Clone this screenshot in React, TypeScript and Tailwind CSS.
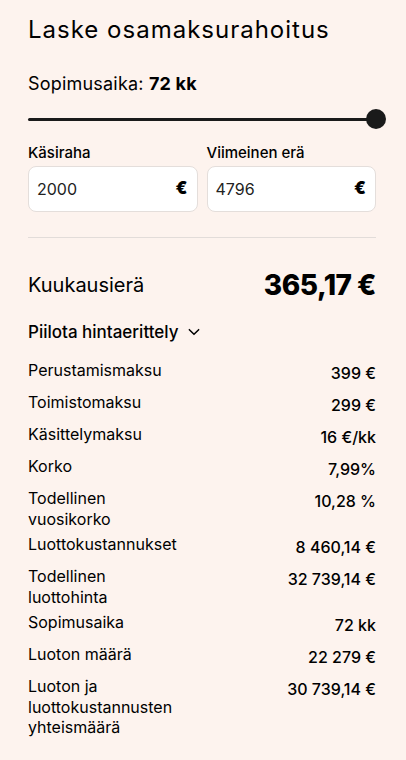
import React from "react";

const rows: { label: string; value: string }[] = [
  { label: "Perustamismaksu", value: "399 €" },
  { label: "Toimistomaksu", value: "299 €" },
  { label: "Käsittelymaksu", value: "16 €/kk" },
  { label: "Korko", value: "7,99%" },
  { label: "Todellinen vuosikorko", value: "10,28 %" },
  { label: "Luottokustannukset", value: "8 460,14 €" },
  { label: "Todellinen luottohinta", value: "32 739,14 €" },
  { label: "Sopimusaika", value: "72 kk" },
  { label: "Luoton määrä", value: "22 279 €" },
  { label: "Luoton ja luottokustannusten yhteismäärä", value: "30 739,14 €" },
];

const MoneyInput = ({ label, value }: { label: string; value: string }) => (
  <div className="flex-1 flex flex-col gap-[3px]">
    <label className="text-[15px] font-medium leading-[20px] text-black">{label}</label>
    <div className="h-[46px] flex items-center justify-between rounded-[8px] border border-[#e4dedb] bg-white pl-[8px] pr-[9px]">
      <span className="text-[16px] text-[#222]">{value}</span>
      <span className="text-[17px] font-black text-black">€</span>
    </div>
  </div>
);

export default function App() {
  return (
    <div
      className="min-h-screen w-full bg-[#fdf3ee] pl-[28px] pr-[30px] pt-[14px] text-black"
      style={{ fontFamily: "Inter, 'Noto Sans', sans-serif" }}
    >
      <h1 className="text-[24px] leading-[32px] font-normal tracking-[1px]">Laske osamaksurahoitus</h1>

      <div className="mt-[25px] text-[18px] leading-[26px] tracking-[0.2px]">
        Sopimusaika: <span className="font-bold">72 kk</span>
      </div>

      {/* slider */}
      <div className="relative mt-[12px] h-[20px] flex items-center">
        <div className="h-[3px] w-full rounded-full bg-[#1a1a1a]" />
        <div className="absolute right-[-10px] top-0 h-[20px] w-[20px] rounded-full bg-[#1a1a1a]" />
      </div>

      <div className="mt-[14px] flex gap-[9px]">
        <MoneyInput label="Käsiraha" value="2000" />
        <MoneyInput label="Viimeinen erä" value="4796" />
      </div>

      <div className="mt-[25px] h-px w-full bg-[#e2dcd9]" />

      <div className="mt-[29px] flex items-center justify-between">
        <span className="text-[20px] leading-[36px]">Kuukausierä</span>
        <span className="text-[28px] leading-[36px] font-extrabold tracking-[-0.5px]">365,17 €</span>
      </div>

      <button className="mt-[17px] flex items-center gap-[8px] text-[17px] font-medium leading-[24px]">
        Piilota hintaerittely
        <svg width="14" height="14" viewBox="0 0 24 24" fill="none" stroke="currentColor" strokeWidth="2.6" strokeLinecap="round" strokeLinejoin="round">
          <path d="M4 8l8 8 8-8" />
        </svg>
      </button>

      <div className="mt-[16px] flex flex-col gap-[5px] pb-[20px]">
        {rows.map((r) => (
          <div key={r.label} className="flex justify-between items-start text-[16px]">
            <span className="w-[158px] leading-[20.5px]">{r.label}</span>
            <span className="font-medium text-right leading-[27px]">{r.value}</span>
          </div>
        ))}
      </div>
    </div>
  );
}
